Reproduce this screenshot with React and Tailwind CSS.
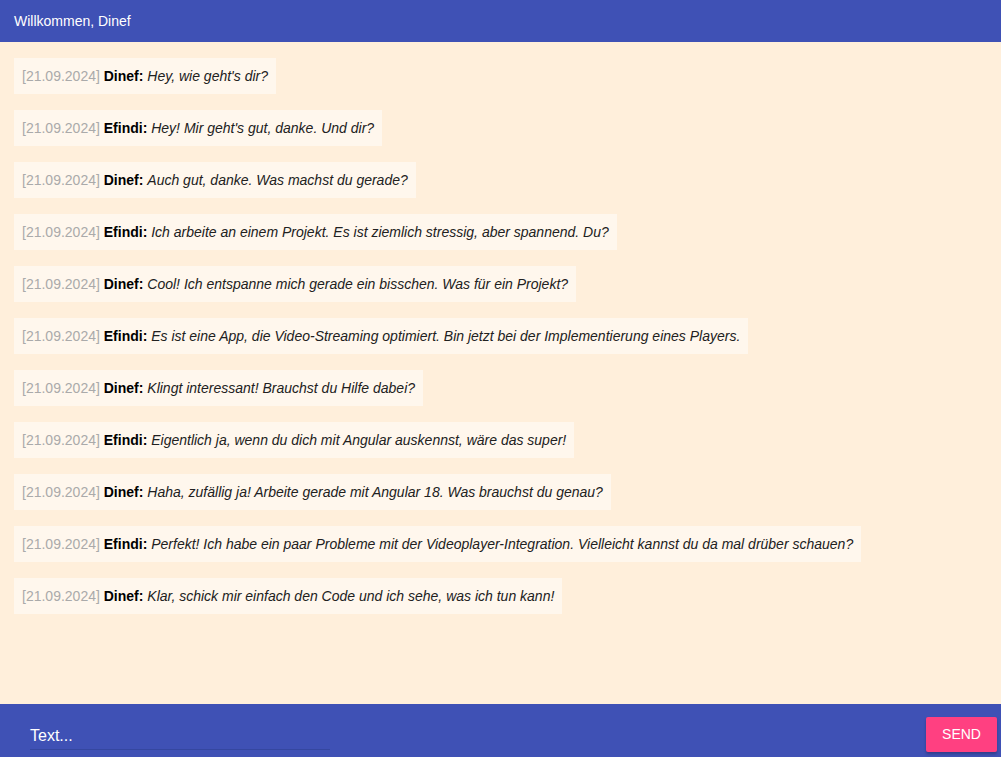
import React from "react";

const msgs = [
  ["Dinef", "Hey, wie geht's dir?"],
  ["Efindi", "Hey! Mir geht's gut, danke. Und dir?"],
  ["Dinef", "Auch gut, danke. Was machst du gerade?"],
  ["Efindi", "Ich arbeite an einem Projekt. Es ist ziemlich stressig, aber spannend. Du?"],
  ["Dinef", "Cool! Ich entspanne mich gerade ein bisschen. Was für ein Projekt?"],
  ["Efindi", "Es ist eine App, die Video-Streaming optimiert. Bin jetzt bei der Implementierung eines Players."],
  ["Dinef", "Klingt interessant! Brauchst du Hilfe dabei?"],
  ["Efindi", "Eigentlich ja, wenn du dich mit Angular auskennst, wäre das super!"],
  ["Dinef", "Haha, zufällig ja! Arbeite gerade mit Angular 18. Was brauchst du genau?"],
  ["Efindi", "Perfekt! Ich habe ein paar Probleme mit der Videoplayer-Integration. Vielleicht kannst du da mal drüber schauen?"],
  ["Dinef", "Klar, schick mir einfach den Code und ich sehe, was ich tun kann!"],
];

export default function App() {
  return (
    <div
      className="flex flex-col h-[757px] w-full bg-[#ffefdb]"
      style={{ fontFamily: '"Liberation Sans", Arial, sans-serif' }}
    >
      <div className="h-[42px] shrink-0 bg-[#3f51b5] flex items-center px-[14px] text-white text-[14px]">
        Willkommen, Dinef
      </div>
      <div className="flex-1 flex flex-col items-start gap-4 pt-4 px-[14px]">
        {msgs.map(([name, text], i) => (
          <div
            key={i}
            className="bg-[#fff7ed] px-2 py-2 text-[14px] leading-5 text-[#212121]"
          >
            <span className="text-[#aaaaaa]">[21.09.2024]</span>{" "}
            <span className="font-bold text-black">{name}:</span>{" "}
            <span className="italic">{text}</span>
          </div>
        ))}
      </div>
      <div className="h-[53px] shrink-0 bg-[#3f51b5] flex items-center justify-between pl-[30px] pr-1">
        <div className="w-[300px] border-b border-[#3547a0] pt-[12px] pb-[1px]">
          <span className="text-white text-[16px] leading-5">Text...</span>
        </div>
        <button className="w-[71px] h-[35px] bg-[#ff4081] text-white text-[14px] rounded-[2px] shadow-[0_2px_3px_rgba(0,0,0,0.25)] mt-[7px]">
          SEND
        </button>
      </div>
    </div>
  );
}
